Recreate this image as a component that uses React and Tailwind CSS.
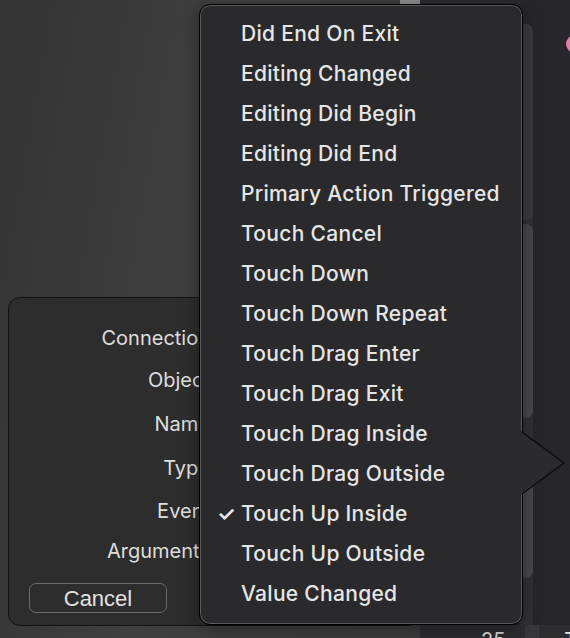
import React from "react";

const items = [
  "Did End On Exit",
  "Editing Changed",
  "Editing Did Begin",
  "Editing Did End",
  "Primary Action Triggered",
  "Touch Cancel",
  "Touch Down",
  "Touch Down Repeat",
  "Touch Drag Enter",
  "Touch Drag Exit",
  "Touch Drag Inside",
  "Touch Drag Outside",
  "Touch Up Inside",
  "Touch Up Outside",
  "Value Changed",
];

const rows = [
  ["Connection", "h-[41px]"],
  ["Object", "h-[43px]"],
  ["Name", "h-[45px]"],
  ["Type", "h-[44px]"],
  ["Event", "h-[41px]"],
  ["Arguments", "h-[40px]"],
];

export default function App() {
  return (
    <div
      className="relative w-[570px] h-[638px] overflow-hidden flex text-[#e4e4e4]"
      style={{ fontFamily: "Inter, 'Noto Sans', sans-serif" }}
    >
      {/* left workspace */}
      <div className="w-[421px] h-full flex flex-col bg-[linear-gradient(100deg,#333333_0%,#3f3f3f_45%,#3b3b3b_100%)]">
        <div className="h-[4px] flex justify-end">
          <div className="w-[20px] h-full bg-[#8a8a8a]" />
        </div>
        <div className="mt-[293px] ml-[8px] w-[412px] h-[329px] rounded-[12px] border border-[#121212] bg-[#2d2d2d] flex flex-col">
          <div className="pt-[19px] flex flex-col">
            {rows.map(([label, h]) => (
              <div key={label} className={`${h} w-[201px] flex items-center justify-end text-[20px] text-[#dedede]`}>
                {label}
              </div>
            ))}
          </div>
          <div
            className="mt-[12px] ml-[20px] w-[138px] h-[30px] rounded-[7px] border-[1.5px] border-[#6b6b6b] flex items-center justify-center text-[22px] text-[#e2e2e2]"
            style={{ fontFamily: "'Liberation Sans', Arial, sans-serif" }}
          >
            Cancel
          </div>
        </div>
      </div>
      {/* divider */}
      <div className="w-[6px] h-full bg-[#0c0c0c]" />
      {/* right column */}
      <div className="flex-1 h-full bg-[#27272b] flex flex-col">
        <div className="flex-1 flex">
          <div className="w-[99px] bg-[#2a2a2e]" />
          <div className="w-[14px] mt-[24px] bg-[#313135] rounded-t-full flex flex-col">
            <div className="h-[196px] bg-[#3a3a3e] rounded-full" />
            <div className="mt-[4px] h-[194px] bg-[#47474b] rounded-full" />
            <div className="mt-[30px] h-[130px] bg-[#47474b] rounded-b-full" />
          </div>
        </div>
        <div className="h-[13px] flex bg-[#2d2d31]">
          <div className="w-[61px]" />
          <div className="text-[20px] leading-[24px] text-[#d8d8d8] pt-[3px]">25</div>
          <div className="w-[20px]" />
          <div className="w-[14px] bg-[#38383c]" />
          <div className="ml-[25px] text-[20px] leading-[24px] pt-[3px] text-[#e8e8e8]">T</div>
        </div>
      </div>

      {/* pink dot */}
      <div className="absolute left-[566px] top-[35px] w-[18px] h-[18px] rounded-full bg-[#e47caa]" />

      {/* popup menu */}
      <div className="absolute left-[199px] top-[4px] w-[324px] h-[621px] rounded-[11px] border border-black bg-[#2a2a2c] shadow-[inset_0_0_0_1px_#5a5a5c,0_4px_16px_rgba(0,0,0,0.35)] py-[9px]">
        {items.map((t) => (
          <div key={t} className="relative h-[40px] flex items-center pl-[41px] text-[21px] font-medium tracking-[0.3px] text-[#e6e6e6]">
            {t === "Touch Up Inside" && (
              <span className="absolute left-[17px] text-[21px] font-semibold">✓</span>
            )}
            {t}
          </div>
        ))}
      </div>

      {/* popover arrow */}
      <svg className="absolute left-[521px] top-[431px]" width="46" height="64" viewBox="0 0 46 64">
        <polygon points="1,1 43,32 1,63" fill="#2b2b2d" stroke="#0a0a0a" strokeWidth="1.2" />
        <rect x="0" y="2" width="2" height="60" fill="#2b2b2d" />
      </svg>
    </div>
  );
}
